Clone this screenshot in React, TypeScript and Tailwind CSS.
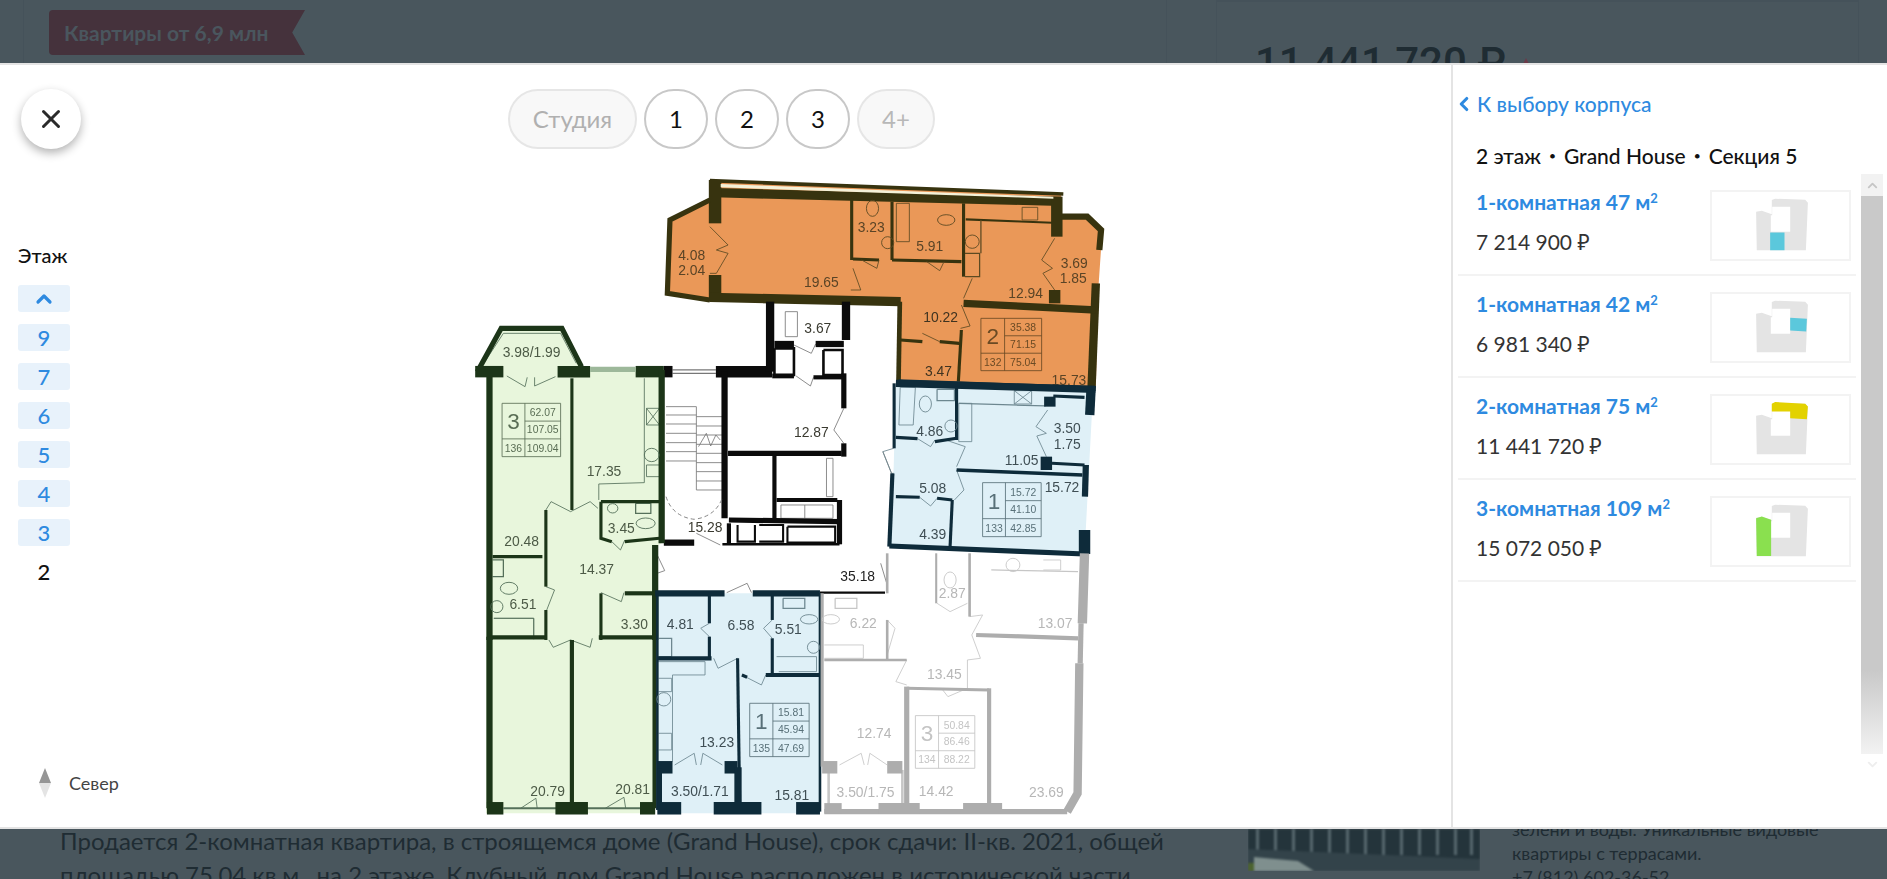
import { ChevronLeft, ChevronUp, X } from 'lucide-react'

type Wall = [string, number]

const floors = ['9', '7', '6', '5', '4', '3']

const flats = [
  { title: '1-комнатная 47 м', price: '7 214 900 ₽', mark: '990,697 1033,697 1033,750 990,750', color: '#5bc8dc' },
  { title: '1-комнатная 42 м', price: '6 981 340 ₽', mark: '1050,647 1100,650 1098,688 1050,685', color: '#5bc8dc' },
  { title: '2-комнатная 75 м', price: '11 441 720 ₽', mark: '995,599 1005,594 1095,599 1103,607 1100,645 1050,642 1050,622 995,622', color: '#e3d200' },
  { title: '3-комнатная 109 м', price: '15 072 050 ₽', mark: '948,636 965,631 993,641 993,749 950,749', color: '#8ae04f' },
]

// walls per flat, coordinates follow the plan raster
const orangeWalls: Wall[] = [
  ['530,362 1345,402', 7],
  ['540,398 1340,424', 18],
  ['542,360 542,490', 24],
  ['542,645 542,725', 24],
  ['530,420 438,480 432,700 530,720', 10],
  ['530,712 970,725', 18],
  ['857,415 857,600', 6],
  ['950,425 950,600', 6],
  ['1115,430 1115,650', 6],
  ['860,597 920,600', 6],
  ['950,600 1110,605', 6],
  ['1120,478 1320,488', 4],
  ['1330,410 1330,530', 22],
  ['1325,690 1325,730', 22],
  ['1340,470 1400,470 1432,510 1428,570', 12],
  ['1420,670 1410,985', 16],
  ['1115,730 1420,750', 14],
  ['1110,810 1103,965', 6],
  ['968,725 965,965', 9],
  ['970,840 1020,845', 6],
  ['1060,845 1105,850', 6],
]

const orangeThin: Wall[] = [
  ['860,625 878,690 855,690', 2],
  ['880,600 915,625 920,600', 2],
  ['1030,605 1060,632 1070,605', 2],
  ['1135,655 1115,715', 2],
  ['1110,735 1130,798 1108,805', 2],
  ['1020,820 1060,845', 2],
  ['530,500 572,555 545,570 572,580 545,640 530,640', 2],
  ['1325,535 1295,600 1320,625 1298,640 1325,690', 2],
  ['1155,480 1155,580', 3],
  ['1118,580 1152,580 1152,650 1118,650', 3],
]

const coreWalls: Wall[] = [
  ['470,215 490,215', 22],
  ['590,215 720,215', 22],
  ['610,215 610,655', 12],
  ['618,460 880,460', 10],
  ['725,465 725,660', 8],
  ['730,600 870,600', 8],
  ['620,660 875,665', 10],
  ['875,600 875,733', 10],
  ['620,670 620,733', 8],
  ['470,728 540,728', 12],
  ['605,733 875,733', 5],
  ['885,220 885,325', 10],
  ['885,430 885,470', 10],
  ['715,5 715,215', 16],
  ['890,5 890,120', 16],
  ['725,132 770,132', 12],
  ['820,132 885,132', 12],
  ['720,228 770,228', 9],
  ['815,232 885,232', 8],
  ['830,878 980,878', 4],
  ['725,145 770,145 770,225 725,225 725,145', 5],
  ['838,150 882,150 882,225 838,225 838,150', 5],
  ['640,675 640,725 680,725 680,675', 4],
  ['690,675 745,675 745,725 690,725', 4],
  ['755,680 865,680 865,728 755,728 755,680', 4],
]

const coreThin: Wall[] = [
  ['490,210 590,210', 3],
  ['490,220 590,220', 3],
  ['885,325 862,390 885,430', 2],
  ['770,135 810,160 820,132', 2],
  ['775,228 808,258 815,232', 2],
  ['750,35 778,35 778,110 750,110 750,35', 2],
  ['475,320 545,320 545,570', 2],
  ['475,345 545,345', 2],
  ['475,372 545,372', 2],
  ['475,400 545,400', 2],
  ['475,428 545,428', 2],
  ['475,455 545,455', 2],
  ['475,483 545,483', 2],
  ['545,350 605,350', 2],
  ['545,378 605,378', 2],
  ['545,405 605,405', 2],
  ['545,433 605,433', 2],
  ['545,460 605,460', 2],
  ['545,488 605,488', 2],
  ['545,515 605,515', 2],
  ['545,543 605,543', 2],
  ['545,570 605,570', 2],
  ['550,440 568,400 578,438 590,405 600,420', 2],
  ['450,752 472,812 450,822', 2],
  ['615,878 662,850 672,878', 2],
  ['545,700 600,735', 2],
  ['975,455 995,520', 2],
  ['970,790 985,855 985,875', 2],
  ['740,615 860,615 860,655 740,655 740,615', 2],
  ['795,615 795,655', 2],
  ['845,475 860,475 860,590 845,590 845,475', 2],
]

const greenWalls: Wall[] = [
  ['40,215 95,85 235,85 280,200', 10],
  ['35,215 100,215', 22],
  ['225,215 300,215', 22],
  ['405,215 470,215', 22],
  ['68,225 68,1020', 12],
  ['465,210 465,730', 12],
  ['450,735 450,1020', 12],
  ['258,235 258,630', 6],
  ['325,605 465,605', 6],
  ['325,605 325,715 350,725', 6],
  ['380,725 460,715', 6],
  ['75,770 190,770', 6],
  ['198,630 198,860', 6],
  ['198,930 198,1020', 6],
  ['325,880 325,1020', 6],
  ['380,880 445,880', 8],
]

const greenThin: Wall[] = [
  ['55,190 100,100 232,100 268,190', 2],
  ['108,228 150,260 155,232', 2],
  ['172,258 220,230', 2],
  ['172,258 172,232', 2],
  ['425,235 425,548 320,552 320,600', 2],
  ['198,630 210,605 255,635 300,605 318,625', 2],
  ['350,725 370,750 380,720', 2],
  ['198,860 218,870 200,930', 2],
  ['325,878 372,905 378,878', 2],
  ['430,325 460,325 460,375 430,375 430,325', 2],
  ['430,325 460,375', 2],
  ['460,325 430,375', 2],
  ['430,495 460,495 460,530 430,530 430,495', 2],
  ['405,610 440,610 440,640 405,640 405,610', 3],
  ['75,780 100,780 100,830 75,830', 3],
  ['78,955 170,955 170,1018', 2],
]

const greenLower: Wall[] = [
  ['70,232 200,232', 8],
  ['320,232 445,232', 8],
  ['258,240 258,740', 8],
  ['68,230 68,745', 12],
  ['62,745 100,745', 24],
  ['220,745 295,745', 24],
  ['415,745 450,745', 24],
  ['448,100 448,745', 7],
]

const greenLowerThin: Wall[] = [
  ['100,745 415,745', 4],
  ['140,745 175,715 178,745', 2],
  ['335,745 378,712 382,745', 2],
  ['205,240 215,262 255,240 300,262 305,235', 2],
  ['78,175 170,175 170,228', 2],
]

const blueAWalls: Wall[] = [
  ['1005,250 1465,268', 14],
  ['1455,268 1452,345', 18],
  ['1440,690 1440,762', 22],
  ['1443,495 1441,590', 12],
  ['990,738 1440,762', 10],
  ['1001,250 1001,445', 6],
  ['997,520 990,740', 8],
  ['1005,412 1055,416', 6],
  ['1095,425 1145,415', 6],
  ['1145,260 1145,420', 6],
  ['1360,290 1360,320', 22],
  ['1352,470 1352,510', 22],
  ['1365,490 1440,495', 6],
  ['1368,288 1440,292', 6],
  ['1145,510 1435,525', 7],
  ['1005,590 1060,592', 6],
  ['1100,595 1135,600', 6],
  ['1135,600 1130,740', 6],
]

const blueAThin: Wall[] = [
  ['1055,416 1085,440 1095,420', 2],
  ['1355,330 1328,380 1352,400 1330,408 1352,470', 2],
  ['1150,310 1350,318', 3],
  ['1060,592 1085,618 1100,595', 2],
  ['1150,310 1180,310 1180,425 1150,425 1150,310', 2],
  ['1015,262 1050,262 1045,375 1012,375 1015,262', 2],
  ['1100,268 1140,268 1140,302 1100,302 1100,268', 3],
  ['1278,272 1318,272 1318,312 1278,312 1278,272', 2],
  ['1278,272 1318,312', 2],
  ['1318,272 1278,312', 2],
  ['1000,445 975,455 995,520 1000,520', 2],
  ['1145,500 1165,440 1120,420', 2],
  ['1145,510 1162,570 1140,600', 2],
]

const blueBWalls: Wall[] = [
  ['450,100 610,100', 12],
  ['675,100 830,100', 12],
  ['830,100 830,755', 5],
  ['455,100 455,750', 5],
  ['575,105 575,190', 6],
  ['575,230 575,295', 6],
  ['455,295 580,295', 8],
  ['640,295 645,745', 6],
  ['720,105 720,180', 6],
  ['720,235 720,345', 6],
  ['705,345 830,345', 8],
  ['650,345 662,352', 6],
  ['455,622 490,622', 24],
  ['610,622 640,622', 24],
  ['641,622 641,745', 14],
  ['461,625 461,745', 8],
  ['455,745 510,745', 24],
  ['585,745 695,745', 24],
  ['775,745 830,745', 24],
]

const blueBThin: Wall[] = [
  ['495,615 540,580 545,615', 2],
  ['555,615 560,580 605,615', 2],
  ['575,190 555,205 575,230', 2],
  ['720,180 700,205 720,235', 2],
  ['585,295 595,325 640,295', 2],
  ['650,345 695,375 705,345', 2],
  ['455,305 565,305 565,345 490,345 490,605', 2],
  ['458,355 488,355 488,395 458,395', 2],
  ['458,520 488,520 488,570 458,570', 2],
  ['745,115 795,115 795,145 745,145 745,115', 3],
  ['730,290 822,290 822,335 735,335', 2],
  ['458,235 488,235 488,290 458,290', 3],
]

const grayWalls: Wall[] = [
  ['1440,-20 1435,190', 18],
  ['1428,310 1424,700 1400,755', 16],
  ['1432,190 1430,310', 10],
  ['840,755 1400,755', 10],
  ['835,100 835,620', 6],
  ['985,-20 985,100', 5],
  ['985,180 985,300', 5],
  ['840,300 1030,300', 5],
  ['1030,380 1030,745', 10],
  ['1030,385 1220,390', 6],
  ['1220,385 1220,745', 8],
  ['1190,225 1425,235', 8],
  ['1175,-20 1175,170', 5],
  ['1098,-20 1098,130', 4],
  ['840,745 880,745', 20],
  ['965,745 1060,745', 20],
  ['1160,745 1250,745', 20],
  ['835,622 870,622', 24],
  ['985,622 1020,622', 24],
]

const grayThin: Wall[] = [
  ['985,180 1003,205 985,285', 2],
  ['1175,170 1205,165 1180,225 1200,295 1170,300 1170,385 1125,410 1110,385', 2],
  ['1030,300 1005,365 1030,375', 2],
  ['1100,130 1130,155 1170,130', 2],
  ['875,615 925,580 932,615', 2],
  ['940,615 945,580 985,615', 2],
  ['1225,30 1425,35', 3],
  ['865,115 915,115 915,145 865,145 865,115', 3],
  ['840,255 930,255 930,295 840,295', 2],
  ['1345,0 1385,0 1385,30 1345,30', 2],
  ['850,630 850,745', 5],
  ['1020,630 1020,745', 5],
]

function Lines({ items, color }: { items: Wall[]; color: string }) {
  return (
    <>
      {items.map(([points, width]) => (
        <polyline
          key={points}
          points={points}
          fill="none"
          stroke={color}
          strokeWidth={width * (width > 3 ? 0.52 : 0.42)}
          vectorEffect="non-scaling-stroke"
        />
      ))}
    </>
  )
}

function Label({ x, y, size = 32, fill = '#3a3a30', children }: { x: number; y: number; size?: number; fill?: string; children: string }) {
  return (
    <text
      transform={`translate(${x} ${y}) scale(1 1.301)`}
      fontSize={size}
      fill={fill}
      textAnchor="middle"
      dominantBaseline="central"
      fontFamily="'Liberation Sans', sans-serif"
    >
      {children}
    </text>
  )
}

function Ring({ cx, cy, rx, ry, color }: { cx: number; cy: number; rx: number; ry: number; color: string }) {
  return <ellipse cx={cx} cy={cy} rx={rx} ry={ry} fill="none" stroke={color} strokeWidth={0.9} vectorEffect="non-scaling-stroke" />
}

function InfoBox({ x, y, w, h, color, rooms, a, b, no, c }: { x: number; y: number; w: number; h: number; color: string; rooms: string; a: string; b: string; no: string; c: string }) {
  const col = x + w * 0.39
  const r1 = y + h / 3
  const r2 = y + (h * 2) / 3
  return (
    <g>
      <Lines
        color={color}
        items={[
          [`${x},${y} ${x + w},${y} ${x + w},${y + h} ${x},${y + h} ${x},${y}`, 2],
          [`${col},${y} ${col},${y + h}`, 2],
          [`${col},${r1} ${x + w},${r1}`, 2],
          [`${x},${r2} ${x + w},${r2}`, 2],
        ]}
      />
      <Label x={x + w * 0.195} y={y + h * 0.34} size={52} fill={color}>{rooms}</Label>
      <Label x={col + w * 0.305} y={y + h * 0.18} size={24} fill={color}>{a}</Label>
      <Label x={col + w * 0.305} y={y + h * 0.5} size={24} fill={color}>{b}</Label>
      <Label x={x + w * 0.195} y={y + h * 0.84} size={24} fill={color}>{no}</Label>
      <Label x={col + w * 0.305} y={y + h * 0.84} size={24} fill={color}>{c}</Label>
    </g>
  )
}

function FloorPlan() {
  return (
    <svg width="690" height="650" viewBox="460 170 690 650" className="block blur-[0.5px]">
      <g transform="translate(460 300) scale(0.4337 0.3333)">
        {/* fills */}
        <polygon points="60,230 40,215 95,85 235,85 285,200 470,205 465,730 450,740 450,1540 60,1540" fill="#e8f6dc" />
        <polygon points="1005,250 1460,268 1440,760 990,740 1000,500" fill="#dff0f7" />
        <polygon points="455,880 830,880 830,1540 455,1540" fill="#dff0f7" />
        <g transform="translate(46.1 -720)">
          <polygon points="435,480 530,420 530,365 1340,405 1340,465 1400,468 1435,510 1425,700 1420,985 965,965 968,725 855,710 530,715 530,722 430,705" fill="#ea9858" />
          <Lines items={orangeWalls} color="#37330f" />
          <polygon points="555,372 1322,410 1322,416 555,382" fill="#f4f1d8" />
          <Lines items={orangeThin} color="#5c4a22" />
          <Lines items={[['965,965 1420,985', 9]]} color="#10303f" />
          <Ring cx={940} cy={548} rx={14} ry={18} color="#5c4a22" />
          <Ring cx={905} cy={445} rx={14} ry={24} color="#5c4a22" />
          <Ring cx={1075} cy={480} rx={20} ry={16} color="#5c4a22" />
          <Ring cx={1135} cy={545} rx={16} ry={20} color="#5c4a22" />
          <Lines
            color="#5c4a22"
            items={[
              ['960,430 990,430 990,545 960,545 960,430', 2],
              ['1250,442 1286,442 1286,480 1250,480 1250,442', 2],
            ]}
          />
          <InfoBox x={1155} y={775} w={140} h={157} color="#6a4a24" rooms="2" a="35.38" b="71.15" no="132" c="75.04" />
          <Label x={488} y={585} fill="#5a4426">4.08</Label>
          <Label x={488} y={630} fill="#5a4426">2.04</Label>
          <Label x={787} y={665} fill="#5a4426">19.65</Label>
          <Label x={902} y={500} fill="#5a4426">3.23</Label>
          <Label x={1037} y={557} fill="#5a4426">5.91</Label>
          <Label x={1258} y={698} fill="#5a4426">12.94</Label>
          <Label x={1370} y={610} fill="#5a4426">3.69</Label>
          <Label x={1368} y={655} fill="#5a4426">1.85</Label>
          <Label x={1062} y={770} fill="#3f3320">10.22</Label>
          <Label x={1057} y={933} fill="#3f3320">3.47</Label>
          <Label x={1358} y={960} fill="#5a4426">15.73</Label>
        </g>

        {/* core */}
        <Lines items={coreThin} color="#777777" />
        <Lines items={coreWalls} color="#0b0b0b" />
        <path d="M475 590 Q490 650 540 658 Q590 650 606 590" fill="none" stroke="#777777" strokeWidth={0.9} strokeDasharray="4 3" vectorEffect="non-scaling-stroke" />
        <Label x={825} y={83}>3.67</Label>
        <Label x={810} y={397}>12.87</Label>
        <Label x={565} y={680}>15.28</Label>
        <Label x={917} y={828} fill="#222222">35.18</Label>

        {/* 3-room flat */}
        <Lines items={greenThin} color="#55705a" />
        <Lines items={greenWalls} color="#1c3518" />
        <Lines items={[['300,208 405,208', 10]]} color="#9db89a" />
        <Ring cx={442} cy={465} rx={17} ry={20} color="#55705a" />
        <Ring cx={352} cy={625} rx={12} ry={14} color="#55705a" />
        <Ring cx={428} cy={670} rx={22} ry={16} color="#55705a" />
        <Ring cx={113} cy={865} rx={20} ry={18} color="#55705a" />
        <Ring cx={85} cy={920} rx={14} ry={18} color="#55705a" />
        <InfoBox x={97} y={310} w={135} h={160} color="#5a6e55" rooms="3" a="62.07" b="107.05" no="136" c="109.04" />
        <Label x={165} y={157} fill="#4c5a46">3.98/1.99</Label>
        <Label x={332} y={512} fill="#4c5a46">17.35</Label>
        <Label x={142} y={722} fill="#4c5a46">20.48</Label>
        <Label x={315} y={807} fill="#4c5a46">14.37</Label>
        <Label x={145} y={913} fill="#4c5a46">6.51</Label>
        <Label x={372} y={685} fill="#4c5a46">3.45</Label>
        <Label x={402} y={972} fill="#4c5a46">3.30</Label>

        {/* 1-room flat, right */}
        <Lines items={blueAThin} color="#6d8790" />
        <Lines items={blueAWalls} color="#0e2b3a" />
        <Ring cx={1132} cy={378} rx={14} ry={18} color="#6d8790" />
        <Ring cx={1073} cy={312} rx={14} ry={24} color="#6d8790" />
        <InfoBox x={1205} y={548} w={135} h={162} color="#587078" rooms="1" a="15.72" b="41.10" no="133" c="42.85" />
        <Label x={1083} y={392} fill="#3f4e54">4.86</Label>
        <Label x={1295} y={480} fill="#3f4e54">11.05</Label>
        <Label x={1400} y={385} fill="#3f4e54">3.50</Label>
        <Label x={1400} y={433} fill="#3f4e54">1.75</Label>
        <Label x={1090} y={563} fill="#3f4e54">5.08</Label>
        <Label x={1388} y={562} fill="#3f4e54">15.72</Label>
        <Label x={1090} y={702} fill="#3f4e54">4.39</Label>

        <g transform="translate(0 780)">
          <Lines items={greenLowerThin} color="#55705a" />
          <Lines items={greenLower} color="#1c3518" />
          <Label x={202} y={692} fill="#4c5a46">20.79</Label>
          <Label x={398} y={688} fill="#4c5a46">20.81</Label>

          {/* 1-room flat, bottom */}
          <Lines items={blueBThin} color="#6d8790" />
          <Lines items={blueBWalls} color="#0e2b3a" />
          <Ring cx={470} cy={418} rx={16} ry={20} color="#6d8790" />
          <Ring cx={805} cy={178} rx={20} ry={14} color="#6d8790" />
          <Ring cx={815} cy={262} rx={14} ry={18} color="#6d8790" />
          <InfoBox x={668} y={430} w={137} h={160} color="#587078" rooms="1" a="15.81" b="45.94" no="135" c="47.69" />
          <Label x={508} y={192} fill="#3f4e54">4.81</Label>
          <Label x={648} y={196} fill="#3f4e54">6.58</Label>
          <Label x={757} y={207} fill="#3f4e54">5.51</Label>
          <Label x={592} y={546} fill="#3f4e54">13.23</Label>
          <Label x={553} y={692} fill="#3f4e54">3.50/1.71</Label>
          <Label x={765} y={704} fill="#3f4e54">15.81</Label>

          {/* unsold flats */}
          <Lines items={grayThin} color="#c6c6c6" />
          <Lines items={grayWalls} color="#adadad" />
          <Ring cx={1130} cy={60} rx={14} ry={24} color="#c6c6c6" />
          <Ring cx={1275} cy={15} rx={16} ry={20} color="#c6c6c6" />
          <Ring cx={855} cy={178} rx={20} ry={14} color="#c6c6c6" />
          <InfoBox x={1050} y={467} w={137} h={158} color="#c4c4c4" rooms="3" a="50.84" b="86.46" no="134" c="88.22" />
          <Label x={930} y={190} fill="#b7b7b7">6.22</Label>
          <Label x={1372} y={190} fill="#b7b7b7">13.07</Label>
          <Label x={1135} y={100} fill="#b7b7b7">2.87</Label>
          <Label x={1117} y={342} fill="#b7b7b7">13.45</Label>
          <Label x={955} y={518} fill="#b7b7b7">12.74</Label>
          <Label x={935} y={695} fill="#b7b7b7">3.50/1.75</Label>
          <Label x={1098} y={692} fill="#b7b7b7">14.42</Label>
          <Label x={1352} y={697} fill="#b7b7b7">23.69</Label>
        </g>
      </g>
    </svg>
  )
}

function Thumb({ mark, color }: { mark: string; color: string }) {
  return (
    <div className="w-[141px] h-[71px] border-2 border-[#f3f3f3] shrink-0">
      <svg viewBox="816 576 410 200" className="block w-full h-full">
        <path
          fillRule="evenodd"
          fill="#e4e4e4"
          d="M948 635 L965 632 L995 642 L995 600 L1005 596 L1095 599 L1103 608 L1097 750 L950 750 Z M992 645 L992 695 L1050 695 L1050 620 L996 620 L996 645 Z"
        />
        <polygon points={mark} fill={color} />
      </svg>
    </div>
  )
}

// dimmed building photo behind the modal
function Facade() {
  const columns = [8, 26, 44, 62, 80, 98, 116, 134, 152, 170, 188, 206, 222]
  return (
    <div className="w-[232px] h-[42px] shrink-0 overflow-hidden">
      <svg width="232" height="42" viewBox="0 0 232 42" className="block blur-[1px]">
        <rect width="232" height="42" fill="#24343b" />
        {columns.map((x) => (
          <rect key={x} x={x} y="0" width="3" height="26" fill="#56676d" />
        ))}
        <polygon points="0,20 232,30 232,42 0,42" fill="#33434a" />
        <polygon points="6,28 50,32 66,42 6,42" fill="#7f8f8e" />
        <rect y="34" width="6" height="8" fill="#4c6330" />
      </svg>
    </div>
  )
}

export default function App() {
  return (
    <div className="w-[1887px] h-[879px] overflow-hidden flex flex-col bg-[#49565d] font-['Lato','Noto_Sans',sans-serif]">
      {/* page behind the modal, top part */}
      <div className="h-[63px] shrink-0 overflow-hidden flex text-[#1f2c33]">
        <div className="w-[49px] shrink-0">
          <div className="ml-[23px] w-px h-[63px] bg-[#45525a]" />
        </div>
        <div className="w-[256px] h-[45px] mt-[10px] shrink-0 bg-[#45323c] rounded-l flex items-center pl-[15px] [clip-path:polygon(0_0,100%_0,95%_50%,100%_100%,0_100%)]">
          <span className="text-[21px] font-bold text-[#4a565e] whitespace-nowrap">Квартиры от 6,9 млн</span>
        </div>
        <div className="w-[862px] shrink-0 flex">
          <div className="ml-[861px] w-px h-full bg-[#45525a]" />
        </div>
        <div className="ml-[49px] flex-1 mr-[28px] border-x border-t-2 border-[#45525a] pl-[38px] pt-[36px]">
          <div className="flex items-start gap-[14px]">
            <span className="text-[42px] leading-[50px] font-medium font-['Roboto',sans-serif] whitespace-nowrap">11 441 720 ₽</span>
            <span className="mt-[20px] w-0 h-0 border-x-[6px] border-x-transparent border-b-[12px] border-b-[#6b3a48]" />
          </div>
        </div>
      </div>

      {/* modal */}
      <div className="h-[766px] shrink-0 bg-white border-y-2 border-[#e4e4e4] flex">
        <div className="w-[460px] shrink-0 pl-[18px] flex flex-col">
          <button className="mt-[24px] ml-[3px] w-[60px] h-[60px] rounded-full bg-white shadow-[0_4px_10px_rgba(0,0,0,0.3)] flex items-center justify-center text-[#2a2a2a]">
            <X size={30} strokeWidth={2.4} />
          </button>
          <div className="mt-[94px] text-[20px] leading-[24px] font-medium text-[#111]">Этаж</div>
          <div className="mt-[18px] w-[52px] flex flex-col gap-3 text-[22px] font-medium text-[#2e8ae0]">
            <div className="h-[27px] rounded-[3px] bg-[#e8f2fb] flex items-center justify-center">
              <ChevronUp size={24} strokeWidth={3.2} />
            </div>
            {floors.map((floor) => (
              <div key={floor} className="h-[27px] rounded-[3px] bg-[#e8f2fb] flex items-center justify-center">
                {floor}
              </div>
            ))}
            <div className="h-[27px] flex items-center justify-center text-[#111]">2</div>
          </div>
          <div className="mt-[183px] ml-[21px] flex items-center gap-[18px]">
            <div className="flex flex-col">
              <span className="w-0 h-0 border-x-[6px] border-x-transparent border-b-[15px] border-b-[#969696]" />
              <span className="w-0 h-0 border-x-[6px] border-x-transparent border-t-[15px] border-t-[#e4e4e4]" />
            </div>
            <span className="text-[18px] text-[#444]">Север</span>
          </div>
        </div>

        <div className="w-[991px] shrink-0 flex flex-col">
          <div className="mt-[24px] ml-[48px] flex gap-[7px] text-[24px] h-[60px] shrink-0">
            <div className="w-[129px] rounded-[30px] border-2 border-[#e6e6e6] bg-[#f8f8f8] text-[#b0b0b0] flex items-center justify-center">Студия</div>
            {['1', '2', '3'].map((n) => (
              <div key={n} className="w-[64px] rounded-[30px] border-2 border-[#c8c8c8] text-[#111] flex items-center justify-center">{n}</div>
            ))}
            <div className="w-[78px] rounded-[30px] border-2 border-[#e6e6e6] bg-[#f8f8f8] text-[#b8b8b8] flex items-center justify-center">4+</div>
          </div>
          <div className="mt-[21px]">
            <FloorPlan />
          </div>
        </div>

        <div className="flex-1 border-l-2 border-[#e4e4e4] flex flex-col min-w-0">
          <div className="mt-[25px] h-[28px] flex items-center text-[21px] font-medium text-[#2e8ae0]">
            <ChevronLeft size={22} strokeWidth={3.4} />
            <span className="ml-[2px]">К выбору корпуса</span>
          </div>
          <div className="mt-[25px] ml-[23px] h-[26px] flex items-center text-[21px] font-medium text-[#111] whitespace-nowrap">
            2 этаж<span className="mx-[8px] text-[12px]">•</span>Grand House<span className="mx-[8px] text-[12px]">•</span>Секция 5
          </div>
          <div className="mt-[5px] flex flex-1 min-h-0">
            <div className="w-[398px] ml-[5px] shrink-0">
              {flats.map((flat) => (
                <div key={flat.title} className="h-[102px] border-b-2 border-[#f3f3f3] pl-[18px] pr-[5px] pt-[16px] flex justify-between">
                  <div>
                    <div className="text-[21px] leading-[24px] font-bold text-[#2e8ae0] whitespace-nowrap">
                      {flat.title}<span className="text-[13px] leading-none align-[7px]">2</span>
                    </div>
                    <div className="mt-[15px] text-[21px] leading-[26px] text-[#333] whitespace-nowrap">{flat.price}</div>
                  </div>
                  <Thumb mark={flat.mark} color={flat.color} />
                </div>
              ))}
            </div>
            <div className="ml-[5px] w-[22px] h-[600px] shrink-0 flex flex-col">
              <div className="h-[22px] bg-[#f2f2f2] text-[#c6c6c6] flex items-center justify-center">
                <ChevronUp size={15} strokeWidth={3} />
              </div>
              <div className="flex-1 bg-linear-to-b from-[#c9c9c9] from-85% to-[#f2f2f2]" />
              <div className="h-[20px] text-[#eeeeee] flex items-center justify-center">
                <ChevronUp size={15} strokeWidth={3} className="rotate-180" />
              </div>
            </div>
          </div>
        </div>
      </div>

      {/* page behind the modal, bottom part */}
      <div className="flex-1 overflow-hidden flex text-[#1f2c33]">
        <div className="w-[1248px] shrink-0 pl-[60px] text-[24px] leading-[34px] -mt-[5px] whitespace-nowrap">
          <p>Продается 2-комнатная квартира, в строящемся доме (Grand House), срок сдачи: II-кв. 2021, общей</p>
          <p>площадью 75,04 кв.м., на 2 этаже. Клубный дом Grand House расположен в исторической части</p>
        </div>
        <Facade />
        <div className="ml-[32px] text-[18px] leading-[24px] -mt-[12px] whitespace-nowrap">
          <p>зелени и воды. Уникальные видовые</p>
          <p>квартиры с террасами.</p>
          <p>+7 (812) 602-36-52</p>
        </div>
      </div>
    </div>
  )
}
